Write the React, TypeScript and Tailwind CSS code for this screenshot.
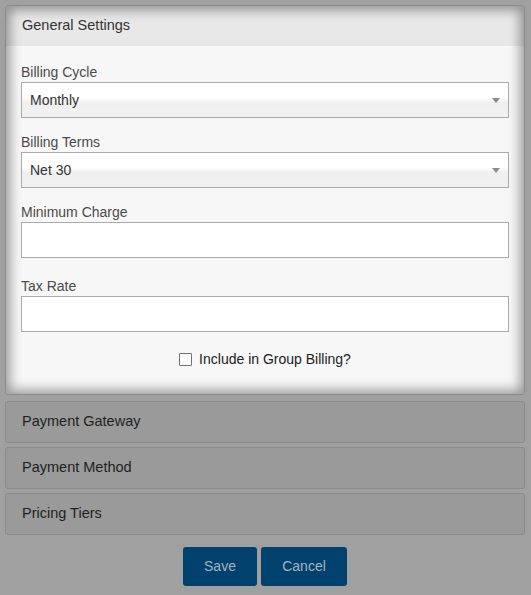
import { ChangeEvent, useState } from "react";

const selectCls =
  "block w-full h-[36px] appearance-none rounded-none border border-[#ababab] bg-[linear-gradient(#ffffff_0%,#ffffff_42%,#efefef_58%,#f2f2f2_100%)] pl-[8px] pr-[24px] text-[14px] text-[#333] outline-none";

const inputCls =
  "block w-full h-[36px] rounded-none border border-[#ababab] bg-white px-[8px] text-[14px] text-[#333] outline-none";

function SelectField({
  label,
  value,
  options,
  onChange,
}: {
  label: string;
  value: string;
  options: string[];
  onChange: (v: string) => void;
}) {
  return (
    <div>
      <label className="block text-[14px] leading-[20px] text-[#4a4a4a]">{label}</label>
      <div className="relative">
        <select
          className={selectCls}
          value={value}
          onChange={(e: ChangeEvent<HTMLSelectElement>) => onChange(e.target.value)}
        >
          {options.map((o) => (
            <option key={o}>{o}</option>
          ))}
        </select>
        {/* caret */}
        <span className="pointer-events-none absolute right-[9px] top-[16px] h-0 w-0 border-x-[4px] border-t-[5px] border-x-transparent border-t-[#8a8a8a]" />
      </div>
    </div>
  );
}

function CollapsedPanel({ title }: { title: string }) {
  return (
    <div className="h-[42px] rounded-[3px] border border-[#8b8b8b] bg-[#9a9a9a] px-[16px] flex items-center text-[14.5px] text-[#1f1f1f]">
      {title}
    </div>
  );
}

export default function App() {
  const [cycle, setCycle] = useState("Monthly");
  const [terms, setTerms] = useState("Net 30");
  const [groupBilling, setGroupBilling] = useState(false);

  return (
    <div className="min-h-screen bg-[#a0a0a0] px-[5px] pt-[5px] pb-[9px] font-['Liberation_Sans',Arial,sans-serif]">
      <div className="w-[520px] flex flex-col">
        {/* General Settings (highlighted) */}
        <div className="relative overflow-hidden rounded-[3px] border border-[#8b8b8b]">
          <div className="h-[40px] bg-[#e8e8e8] px-[16px] flex items-center text-[14.5px] text-[#333]">
            General Settings
          </div>
          <div className="bg-[#f7f7f7] px-[15px] pt-[16px] pb-[25px]">
            <SelectField
              label="Billing Cycle"
              value={cycle}
              options={["Monthly", "Quarterly", "Annually"]}
              onChange={setCycle}
            />
            <div className="mt-[14px]">
              <SelectField
                label="Billing Terms"
                value={terms}
                options={["Net 15", "Net 30", "Net 60"]}
                onChange={setTerms}
              />
            </div>
            <div className="mt-[14px]">
              <label className="block text-[14px] leading-[20px] text-[#4a4a4a]">Minimum Charge</label>
              <input type="text" className={inputCls} />
            </div>
            <div className="mt-[18px]">
              <label className="block text-[14px] leading-[20px] text-[#4a4a4a]">Tax Rate</label>
              <input type="text" className={inputCls} />
            </div>
            <label className="mt-[17px] h-[20px] flex items-center justify-center gap-[7px] text-[14px] text-[#222]">
              <input
                type="checkbox"
                checked={groupBilling}
                onChange={(e) => setGroupBilling(e.target.checked)}
                className="appearance-none w-[13px] h-[13px] border border-[#707070] bg-white rounded-[1px] checked:bg-[#1a73e8]"
              />
              Include in Group Billing?
            </label>
          </div>
          {/* vignette of the tour highlight */}
          <div className="pointer-events-none absolute inset-0 shadow-[inset_0_0_12px_4px_rgba(0,0,0,0.38)]" />
        </div>

        <div className="mt-[6px] flex flex-col gap-[4px]">
          <CollapsedPanel title="Payment Gateway" />
          <CollapsedPanel title="Payment Method" />
          <CollapsedPanel title="Pricing Tiers" />
        </div>

        <div className="mt-[12px] flex justify-center gap-[4px]">
          <button className="h-[39px] w-[74px] rounded-[3px] bg-[#00426d] text-[14px] text-[#a6b4c2]">
            Save
          </button>
          <button className="h-[39px] w-[86px] rounded-[3px] bg-[#00426d] text-[14px] text-[#a6b4c2]">
            Cancel
          </button>
        </div>
      </div>
    </div>
  );
}
